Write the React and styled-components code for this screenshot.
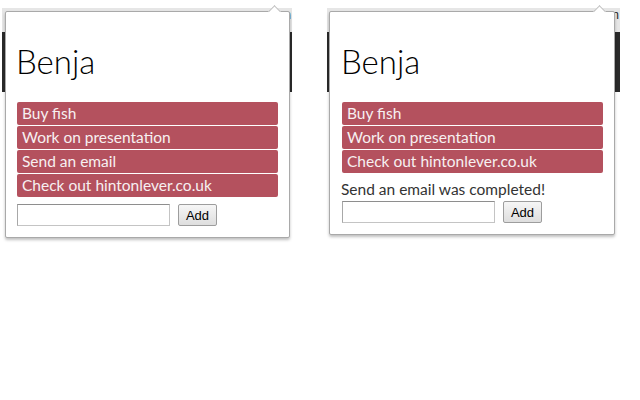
import React from 'react';
import styled, { createGlobalStyle } from 'styled-components';

const Global = createGlobalStyle`
  html, body {
    margin: 0;
    background: #fff;
  }
  body {
    font-family: Lato, "Open Sans", sans-serif;
  }
`

const Page = styled.main`
  display: flex;
  gap: 35px;
  padding: 8px 0 0 2px;
`

const Shot = styled.section`
  position: relative;
  width: ${({ $width }) => $width}px;
  height: 240px;
`

const Strip = styled.div`
  height: 24px;
  background: #e6e6e6;
  display: flex;
  justify-content: flex-end;
  align-items: flex-start;
  font-family: "Liberation Sans", Arial, sans-serif;
  font-size: 12px;
  color: #222;
  padding-right: 1px;
`

const DarkBand = styled.div`
  height: 60px;
  background: #2a2a2a;
`

const Popup = styled.div`
  position: absolute;
  top: 3px;
  left: ${({ $left }) => $left}px;
  width: ${({ $width }) => $width}px;
  box-sizing: border-box;
  background: #fff;
  border: 1px solid #a9a9a9;
  border-radius: 2px;
  box-shadow: 0 2px 3px rgba(0, 0, 0, 0.25);
  padding: 0 11px 11px ${({ $padLeft }) => $padLeft}px;

  &::before {
    content: "";
    position: absolute;
    top: -5px;
    right: 10px;
    width: 8px;
    height: 8px;
    background: #fff;
    border-left: 1px solid #bdbdbd;
    border-top: 1px solid #bdbdbd;
    transform: rotate(45deg);
  }
`

const Title = styled.h1`
  margin: 26px 0 18px -1px;
  font-size: 33px;
  line-height: 46px;
  font-weight: 300;
  color: #000;
`

const List = styled.ul`
  list-style: none;
  margin: 0;
  padding: 0;
  display: flex;
  flex-direction: column;
  gap: 1px;
`

const Item = styled.li`
  height: 23px;
  line-height: 23px;
  padding-left: 5px;
  background: #b4515e;
  color: #f7f0f1;
  border-radius: 2px;
  font-size: 15.5px;
`

const Status = styled.p`
  margin: 5px 0 1px -1px;
  font-size: 15.5px;
  line-height: 22px;
  color: #333;
`

const Form = styled.form`
  display: flex;
  align-items: center;
  gap: 8px;
  margin-top: ${({ $top }) => $top}px;
`

const Field = styled.input`
  width: 153px;
  height: 22px;
  box-sizing: border-box;
  border: 1px solid #c4c4c4;
  border-top-color: #8e8e8e;
  border-left-color: #a8a8a8;
  padding: 0 3px;
  background: #fff;
`

const AddButton = styled.button`
  width: 39px;
  height: 22px;
  box-sizing: border-box;
  border: 1px solid #9d9d9d;
  border-radius: 2px;
  background: linear-gradient(#f6f6f6, #dedede);
  font-family: "Liberation Sans", Arial, sans-serif;
  font-size: 13px;
  color: #000;
  padding: 0;
`

const Snapshot = ({ width, popLeft, popWidth, padLeft, items, status }) => (
  <Shot $width={width}>
    <Strip>n</Strip>
    <DarkBand />
    <Popup $left={popLeft} $width={popWidth} $padLeft={padLeft}>
      <Title>Benja</Title>
      <List>
        {items.map((t) => (
          <Item key={t}>{t}</Item>
        ))}
      </List>
      {status && <Status>{status}</Status>}
      <Form $top={status ? 1 : 7} onSubmit={(e) => e.preventDefault()}>
        <Field type="text" />
        <AddButton type="submit">Add</AddButton>
      </Form>
    </Popup>
  </Shot>
)

export default function App() {
  return (
    <Page>
      <Global />
      <Snapshot
        width={290}
        popLeft={3}
        popWidth={285}
        padLeft={11}
        items={['Buy fish', 'Work on presentation', 'Send an email', 'Check out hintonlever.co.uk']}
      />
      <Snapshot
        width={293}
        popLeft={2}
        popWidth={286}
        padLeft={12}
        items={['Buy fish', 'Work on presentation', 'Check out hintonlever.co.uk']}
        status="Send an email was completed!"
      />
    </Page>
  );
}
